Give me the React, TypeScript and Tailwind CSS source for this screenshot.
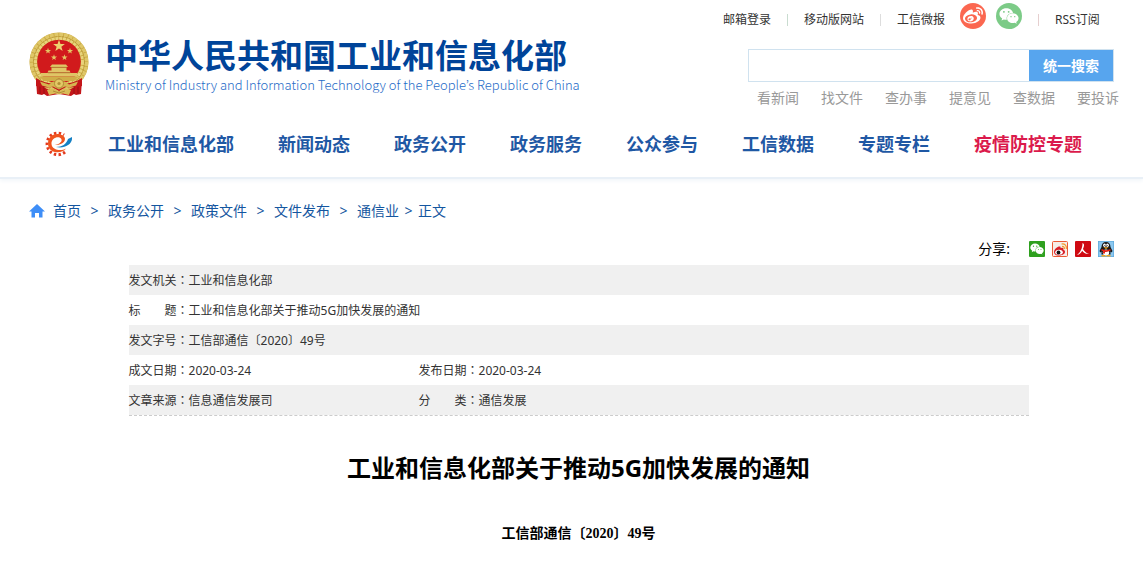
import React from 'react';
import { FaWeibo, FaWeixin } from 'react-icons/fa';

const navItems = ['工业和信息化部', '新闻动态', '政务公开', '政务服务', '公众参与', '工信数据', '专题专栏'];
const quickLinks = ['看新闻', '找文件', '查办事', '提意见', '查数据', '要投诉'];
const crumbs = ['首页', '政务公开', '政策文件', '文件发布', '通信业'];

const star = (cx: number, cy: number, r: number) => {
  const pts: string[] = [];
  for (let i = 0; i < 10; i++) {
    const a = (Math.PI / 5) * i - Math.PI / 2;
    const d = i % 2 ? r * 0.4 : r;
    pts.push(`${cx + d * Math.cos(a)},${cy + d * Math.sin(a)}`);
  }
  return pts.join(' ');
};

const Emblem = () => (
  <svg viewBox="0 0 60 66" className="h-[66px] w-[60px] shrink-0" aria-hidden="true">
    <path d="M7 48L8 62l5 1 2-1 3 2 12-2 12 2 3-2 2 1 5-1 1-14z" fill="#c4161a" />
    <path d="M11 52v10M15 53v9M45 53v9M49 52v10" stroke="#8e0f12" strokeWidth=".8" />
    <circle cx="30" cy="30" r="29.500" fill="#c9a841" />
    <circle cx="30" cy="30" r="27.500" fill="none" stroke="#dfc768" strokeWidth="3.500" strokeDasharray="4 .8" />
    <circle cx="30" cy="30" r="23.500" fill="none" stroke="#e8d47c" strokeWidth="3" strokeDasharray="3 .8" />
    <circle cx="30" cy="30" r="25.500" fill="none" stroke="#b08f33" strokeWidth=".6" strokeDasharray="2 1.500" />
    <circle cx="30" cy="29.500" r="21.800" fill="#d11a1c" />
    <polygon points={star(30, 14, 6.2)} fill="#edd070" />
    <polygon points={star(19, 19, 3.2)} fill="#e5c664" />
    <polygon points={star(41, 19, 3.2)} fill="#e5c664" />
    <polygon points={star(25, 25.5, 3.2)} fill="#e5c664" />
    <polygon points={star(35.5, 25.5, 3.2)} fill="#e5c664" />
    <path d="M23 32.500h14l2 2.500H21z M22.500 35.500h15v3h-15z M19.500 38.500h21l1 2h-23z M12 41h36v3.500H12z" fill="#e0c566" />
    <path d="M22 35.300h16M19 40.800h22" stroke="#a4812f" strokeWidth=".7" />
    <path d="M10 44.500h40l-5 4.500H15z" fill="#cfae48" />
    <path d="M7 46c6 4 11 5 16 5.500l7-5 7 5c5-.500 10-1.500 16-5.500v8c-6 1-11 2-16 1l-7 4-7-4c-5 1-10 0-16-1z" fill="#c4161a" />
    <path d="M11 49.500l9 3 4-3h12l4 3 9-3-2 4-7 2-4-1-6 3-6-3-4 1-7-2z" fill="#d5b650" />
    <circle cx="30" cy="51.500" r="4.500" fill="#e3c866" stroke="#a4812f" strokeWidth=".8" />
    <circle cx="30" cy="51.500" r="1.600" fill="#b18f35" />
    <path d="M18 58l6-1.500 6 3 6-3 6 1.500-2 5-6-1.500-4 1-4-1L20 63z" fill="#d9bc58" />
    <path d="M24 59l6 2 6-2" stroke="#a4812f" strokeWidth=".8" fill="none" />
  </svg>
);

const GearLogo = () => (
  <svg viewBox="0 0 28 26" className="h-[26px] w-7" aria-hidden="true">
    <path d="M21 21A10.800 10.800 0 1 1 20 4" fill="none" stroke="#e33a1e" strokeWidth="3" strokeDasharray="2.400 2.300" />
    <circle cx="13" cy="12.800" r="9" fill="#fff" />
    <path d="M22 17.500c-4 6-18 5.500-18-5C4 3 14 1 19 4.500c5 4 0 10-8 9.500 5-1 8-4 6-6.500-3-3-10 0-9.500 5.500C8 19 17 20.500 22 17.500z" fill="#f0541e" />
    <path d="M12 16c6 0 10.500-3 12-8l4-2c1 7-7 12-16 10z" fill="#1580c4" />
  </svg>
);

const HomeIcon = () => (
  <svg viewBox="0 0 16 14" className="mr-2 h-3.5 w-4" aria-hidden="true">
    <path d="M8 0l8 7.500h-2.500V13.500H10V9H6v4.500H2.500V7.500H0z" fill="#3e8ef7" />
  </svg>
);

const WeiboBadge = () => (
  <svg viewBox="0 0 16 16" className="size-4">
    <rect x=".5" y=".5" width="15" height="15" rx="1" fill="#f6eee8" stroke="#ea5a35" />
    <path d="M2 11c0-3 4-6 6-5.500 1 .3.500 1.500.500 1.500s2.500-1 3 .5c.3 1-.300 1.300-.300 1.300 1.800.500 1.800 1.500 1.800 2.200 0 2-3 3.500-6 3.500S2 13.500 2 11z" fill="#d8202a" />
    <ellipse cx="7" cy="11.200" rx="3.800" ry="2.500" fill="#fff" />
    <circle cx="6.500" cy="11.500" r="1.900" fill="#111" />
    <path d="M10 5.500c1.800-.300 2.800 1 2.300 2.500M9.500 3c3.500-.500 5.500 2 4.800 5" fill="none" stroke="#f39a2b" strokeWidth="1.200" />
  </svg>
);

const PeopleIcon = () => (
  <svg viewBox="0 0 16 16" className="size-4">
    <rect width="16" height="16" rx="1" fill="#cf0a12" />
    <path d="M7.500 2c2.500 1 1.500 3.500.500 6 1.500 2.500 3 4 6 5-3 .500-5.500-1-6.800-3.200C6 12 4.500 13.500 2 14c3-2.500 5.500-6 5.500-12z" fill="#fff" />
  </svg>
);

const QQIcon = () => (
  <svg viewBox="0 0 16 16" className="size-4">
    <rect width="16" height="16" rx="1" fill="#8cc8f0" stroke="#4d9dd4" />
    <path d="M8 1C5 1 3.500 3 3.500 6L1.500 10l.8 1.500L3.500 10.500v3h9v-3l1.200 1 .8-1.500-2-4C12.500 3 11 1 8 1z" fill="#181818" />
    <ellipse cx="6.500" cy="4.300" rx="1.400" ry="1.700" fill="#fff" />
    <ellipse cx="9.500" cy="4.300" rx="1.400" ry="1.700" fill="#fff" />
    <circle cx="6.900" cy="4.500" r=".6" fill="#111" />
    <circle cx="9.100" cy="4.500" r=".6" fill="#111" />
    <ellipse cx="8" cy="11.500" rx="3.200" ry="3" fill="#fff" />
    <path d="M3.500 8c3 1.500 6 1.500 9 0v1.800c-3 1.500-6 1.500-9 0z M5 9.500h2v3H5z" fill="#e22418" />
    <path d="M5.500 6.300h5L8 8z M3.500 14h4v1.500h-4z M8.500 14h4v1.500h-4z" fill="#f5a81c" />
  </svg>
);

const Divider = ({ className }: { className: string }) => <span className={`h-3 w-px ${className}`} />;

interface FieldProps {
  label: string;
  value: string;
}

const Field = ({ label, value }: FieldProps) => (
  <span>
    {label}
    <span className="font-['Noto_Sans_CJK_TC',sans-serif]">：</span>
    {value}
  </span>
);

const App: React.FC = () => {
  return (
    <div className="min-h-screen bg-white font-['Noto_Sans','Noto_Sans_CJK_SC',sans-serif] text-xs text-[#333]">
      <header className="border-b-2 border-[#e9f0f7] shadow-[0_2px_4px_#f2f6fa]">
        <div className="flex h-[110px] justify-between pl-[29px] pr-[23px]">
          <a href="#" className="flex pt-8 text-[#004499]">
            <Emblem />
            <span className="ml-4 whitespace-nowrap">
              <span className="block font-['Noto_Sans_CJK_SC',sans-serif] text-[33px] font-bold leading-[44px]">
                中华人民共和国工业和信息化部
              </span>
              <span className="block font-['Noto_Sans_CJK_KR',sans-serif] text-[13px] font-light leading-[18px] text-[#1f6cc8]">
                Ministry of Industry and Information Technology of the People’s Republic of China
              </span>
            </span>
          </a>
          <div className="w-[397px]">
            <div className="flex h-10 items-center">
              <a href="#">邮箱登录</a>
              <Divider className="mx-4 bg-[#c9dcd0]" />
              <a href="#">移动版网站</a>
              <Divider className="mx-4 bg-[#ddd]" />
              <a href="#">工信微报</a>
              <a href="#" aria-label="微博" className="mb-2 ml-[15px] flex size-[26px] items-center justify-center rounded-full bg-[#fb6750] text-white">
                <FaWeibo className="size-5" />
              </a>
              <a href="#" aria-label="微信" className="mb-2 ml-2.5 flex size-[26px] items-center justify-center rounded-full bg-[#7ccb87] text-white">
                <FaWeixin className="size-5" />
              </a>
              <Divider className="mx-4 bg-[#e6cfcf]" />
              <a href="#">RSS订阅</a>
            </div>
            <form className="ml-[25px] mt-[9px] flex h-[33px] w-[366px] border border-[#d0e2ef]">
              <input type="text" aria-label="搜索" className="min-w-0 flex-1 px-2 text-sm outline-none" />
              <button type="button" className="w-[84px] bg-[#57a5ee] text-sm font-bold text-white">统一搜索</button>
            </form>
            <div className="ml-[34px] flex gap-[22px] whitespace-nowrap pt-1.5 text-sm text-[#999]">
              {quickLinks.map(item => (
                <a key={item} href="#">{item}</a>
              ))}
            </div>
          </div>
        </div>
        <nav className="flex h-[67px] items-center gap-11 whitespace-nowrap pl-11 text-lg font-bold text-[#1f58a4]">
          <a href="#" aria-label="首页" className="-mr-2">
            <GearLogo />
          </a>
          {navItems.map(item => (
            <a key={item} href="#">{item}</a>
          ))}
          <a href="#" className="text-[#db1a4c]">疫情防控专题</a>
        </nav>
      </header>

      <main>
        <div className="flex h-[60px] items-center pl-[29px] pt-1 text-sm text-[#1456a0]">
          <HomeIcon />
          {crumbs.map((item, index) => (
            <React.Fragment key={item}>
              <a href="#">{item}</a>
              <span className={index === crumbs.length - 1 ? 'w-[19px] text-center' : 'w-[27px] text-center'}>&gt;</span>
            </React.Fragment>
          ))}
          <span>正文</span>
        </div>

        <div className="flex h-[26px] justify-end pr-[29px] text-sm text-black">
          <span className="mr-[19px]">分享:</span>
          <div className="flex gap-[7px] pt-0.5">
            <a href="#" aria-label="分享到微信" className="flex size-4 items-center justify-center rounded-[1px] bg-[#2ea01e] text-white">
              <FaWeixin className="size-3.5" />
            </a>
            <a href="#" aria-label="分享到微博"><WeiboBadge /></a>
            <a href="#" aria-label="分享到人民网"><PeopleIcon /></a>
            <a href="#" aria-label="分享到QQ"><QQIcon /></a>
          </div>
        </div>

        <div className="pl-3.5">
          <div className="mx-auto max-w-[900px] border-b border-dashed border-[#ccc]">
            <table className="w-full">
              <tbody>
                <tr className="h-[30px] bg-[#f0f0f0]">
                  <td colSpan={2}><Field label="发文机关" value="工业和信息化部" /></td>
                </tr>
                <tr className="h-[30px]">
                  <td colSpan={2}><Field label="标　　题" value="工业和信息化部关于推动5G加快发展的通知" /></td>
                </tr>
                <tr className="h-[30px] bg-[#f0f0f0]">
                  <td colSpan={2}><Field label="发文字号" value="工信部通信〔2020〕49号" /></td>
                </tr>
                <tr className="h-[30px]">
                  <td className="w-[290px]"><Field label="成文日期" value="2020-03-24" /></td>
                  <td><Field label="发布日期" value="2020-03-24" /></td>
                </tr>
                <tr className="h-[30px] bg-[#f0f0f0]">
                  <td><Field label="文章来源" value="信息通信发展司" /></td>
                  <td><Field label="分　　类" value="通信发展" /></td>
                </tr>
              </tbody>
            </table>
          </div>

          <h1 className="mt-9 text-center text-2xl font-bold text-black">工业和信息化部关于推动5G加快发展的通知</h1>
          <p className="mt-10 text-center font-['Liberation_Serif','Noto_Sans_CJK_SC',serif] text-sm font-bold text-black">
            工信部通信〔2020〕49号
          </p>
        </div>
      </main>
    </div>
  );
};

export default App;
